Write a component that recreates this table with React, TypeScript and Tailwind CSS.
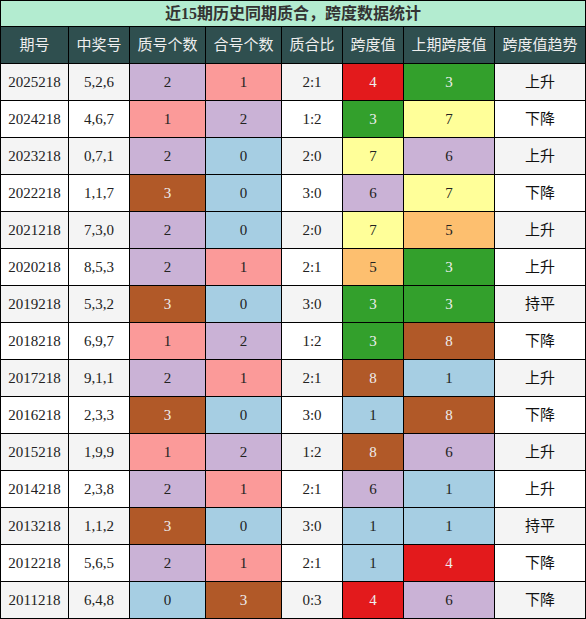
const headers = ["期号", "中奖号", "质号个数", "合号个数", "质合比", "跨度值", "上期跨度值", "跨度值趋势"];

const rows: [string, string, number, number, string, number, number, string][] = [
  ["2025218", "5,2,6", 2, 1, "2:1", 4, 3, "上升"],
  ["2024218", "4,6,7", 1, 2, "1:2", 3, 7, "下降"],
  ["2023218", "0,7,1", 2, 0, "2:0", 7, 6, "上升"],
  ["2022218", "1,1,7", 3, 0, "3:0", 6, 7, "下降"],
  ["2021218", "7,3,0", 2, 0, "2:0", 7, 5, "上升"],
  ["2020218", "8,5,3", 2, 1, "2:1", 5, 3, "上升"],
  ["2019218", "5,3,2", 3, 0, "3:0", 3, 3, "持平"],
  ["2018218", "6,9,7", 1, 2, "1:2", 3, 8, "下降"],
  ["2017218", "9,1,1", 2, 1, "2:1", 8, 1, "上升"],
  ["2016218", "2,3,3", 3, 0, "3:0", 1, 8, "下降"],
  ["2015218", "1,9,9", 1, 2, "1:2", 8, 6, "上升"],
  ["2014218", "2,3,8", 2, 1, "2:1", 6, 1, "上升"],
  ["2013218", "1,1,2", 3, 0, "3:0", 1, 1, "持平"],
  ["2012218", "5,6,5", 2, 1, "2:1", 1, 4, "下降"],
  ["2011218", "6,4,8", 0, 3, "0:3", 4, 6, "下降"],
];

const countColor: Record<number, string> = {
  0: "bg-[#a6cee3] text-[#222]",
  1: "bg-[#fb9a99] text-[#222]",
  2: "bg-[#cab2d6] text-[#222]",
  3: "bg-[#b15928] text-[#eee]",
};

const spanColor: Record<number, string> = {
  1: "bg-[#a6cee3] text-[#222]",
  3: "bg-[#33a02c] text-[#eee]",
  4: "bg-[#e31a1c] text-[#eee]",
  5: "bg-[#fdbf6f] text-[#222]",
  6: "bg-[#cab2d6] text-[#222]",
  7: "bg-[#ffff99] text-[#222]",
  8: "bg-[#b15928] text-[#eee]",
};

const cell = "h-[36px] flex items-center justify-center text-[15px]";

export default function App() {
  return (
    <div
      className="w-[586px] bg-black p-px flex flex-col gap-px"
      style={{ fontFamily: '"Liberation Serif", "Noto Sans CJK SC", serif' }}
    >
      <div className="h-[25px] bg-[#b3ecd0] flex items-center justify-center text-[16px] font-bold text-[#333]">
        近15期历史同期质合，跨度数据统计
      </div>
      <div className="grid grid-cols-[67px_60px_75px_75px_60px_60px_90px_90px] gap-px">
        {headers.map((h) => (
          <div key={h} className={`${cell} bg-[#2f4f4f] text-[#eee]`}>
            {h}
          </div>
        ))}
        {rows.map((r, i) => {
          const bg = i % 2 === 0 ? "bg-[#f4f4f4]" : "bg-white";
          return [
            <div key={`${i}-a`} className={`${cell} ${bg} text-[#222]`}>{r[0]}</div>,
            <div key={`${i}-b`} className={`${cell} ${bg} text-[#222]`}>{r[1]}</div>,
            <div key={`${i}-c`} className={`${cell} ${countColor[r[2]]}`}>{r[2]}</div>,
            <div key={`${i}-d`} className={`${cell} ${countColor[r[3]]}`}>{r[3]}</div>,
            <div key={`${i}-e`} className={`${cell} ${bg} text-[#222]`}>{r[4]}</div>,
            <div key={`${i}-f`} className={`${cell} ${spanColor[r[5]]}`}>{r[5]}</div>,
            <div key={`${i}-g`} className={`${cell} ${spanColor[r[6]]}`}>{r[6]}</div>,
            <div key={`${i}-h`} className={`${cell} ${bg} text-[#111]`}>{r[7]}</div>,
          ];
        })}
      </div>
    </div>
  );
}
